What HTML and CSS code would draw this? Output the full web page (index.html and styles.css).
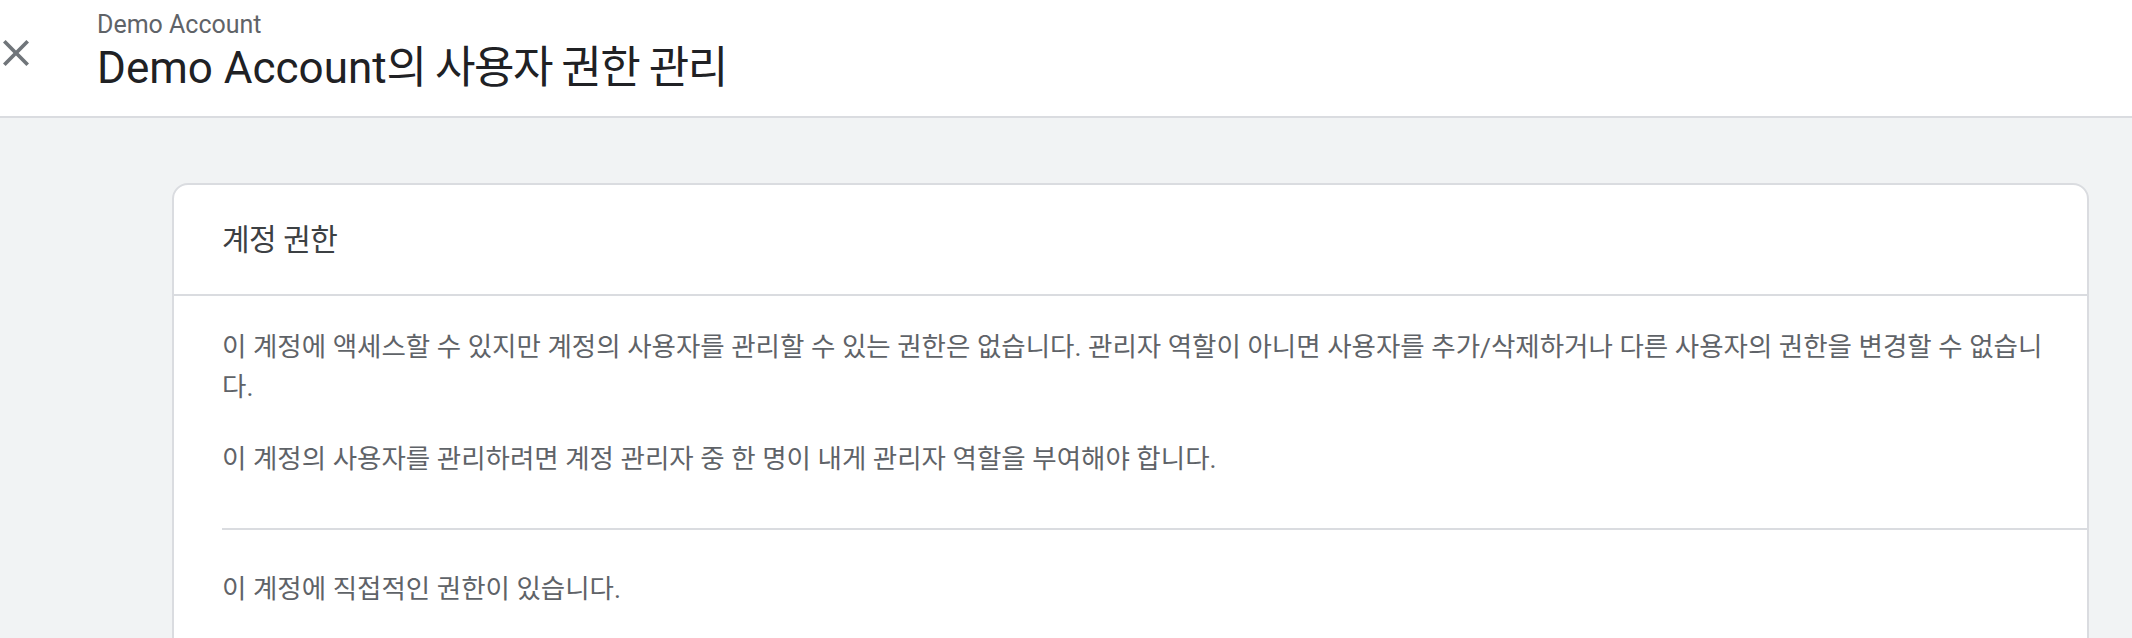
FILE: index.html
```html
<!DOCTYPE html>
<html lang="ko">
<head>
<meta charset="utf-8">
<title>Demo Account의 사용자 권한 관리</title>
<link rel="stylesheet" href="styles.css">
</head>
<body>
<header class="topbar">
  <button class="close" aria-label="닫기">
    <svg viewBox="5 5 14 14" width="26" height="26"><path d="M19 6.41L17.59 5 12 10.59 6.41 5 5 6.41 10.59 12 5 17.59 6.41 19 12 13.41 17.59 19 19 17.59 13.41 12z"/></svg>
  </button>
  <div class="titles">
    <div class="crumb">Demo Account</div>
    <h1 class="title">Demo Account<span class="ko">의 사용자 권한 관리</span></h1>
  </div>
</header>
<main class="content">
  <section class="card">
    <div class="card-head"><h2 class="card-title">계정 권한</h2></div>
    <div class="card-section">
      <p class="text">이 계정에 액세스할 수 있지만 계정의 사용자를 관리할 수 있는 권한은 없습니다. 관리자 역할이 아니면 사용자를 추가/삭제하거나 다른 사용자의 권한을 변경할 수 없습니다.</p>
      <p class="text">이 계정의 사용자를 관리하려면 계정 관리자 중 한 명이 내게 관리자 역할을 부여해야 합니다.</p>
    </div>
    <div class="card-section direct">
      <p class="text">이 계정에 직접적인 권한이 있습니다.</p>
      <div class="table-box"></div>
    </div>
  </section>
</main>
</body>
</html>
```
FILE: styles.css
```css
html, body {
  margin: 0;
  height: 100%;
  overflow: hidden;
}

body {
  background: #f1f3f4;
  font-family: Roboto, "Noto Sans CJK KR", sans-serif;
}

.topbar {
  display: flex;
  align-items: flex-start;
  height: 116px;
  background: #fff;
  border-bottom: 2px solid #dadce0;
}

.close {
  margin: 40px 0 0 3px;
  width: 26px;
  height: 26px;
  padding: 0;
  border: 0;
  background: none;
  fill: #70757a;
  flex: none;
}

.close svg {
  display: block;
}

.titles {
  margin-left: 68px;
  padding-top: 9px;
}

.crumb {
  font-size: 25px;
  line-height: 32px;
  color: #5f6368;
}

.title {
  margin: 0;
  font-size: 44px;
  line-height: 54px;
  font-weight: 400;
  color: #202124;
}

.title .ko {
  letter-spacing: -1.5px;
}

.content {
  padding: 65px 43px 0 172px;
}

.card {
  background: #fff;
  border: 2px solid #dadce0;
  border-radius: 16px;
}

.card-head {
  height: 109px;
  display: flex;
  align-items: center;
  padding: 0 48px;
  border-bottom: 2px solid #dadce0;
}

.card-title {
  margin: 0;
  font-size: 30px;
  line-height: 40px;
  font-weight: 400;
  letter-spacing: -0.5px;
  color: #3c4043;
}

.card-section {
  padding: 31px 44px 49px 48px;
}

.text {
  margin: 0 0 32px;
  font-size: 26.5px;
  line-height: 40px;
  color: #5f6368;
}

.card-section .text:last-child {
  margin-bottom: 0;
}

.direct {
  margin-left: 48px;
  padding: 39px 48px 0 0;
  border-top: 2px solid #dadce0;
}

.table-box {
  margin-top: 26px;
  height: 200px;
  border: 2px solid #dadce0;
  border-radius: 16px;
}
```
